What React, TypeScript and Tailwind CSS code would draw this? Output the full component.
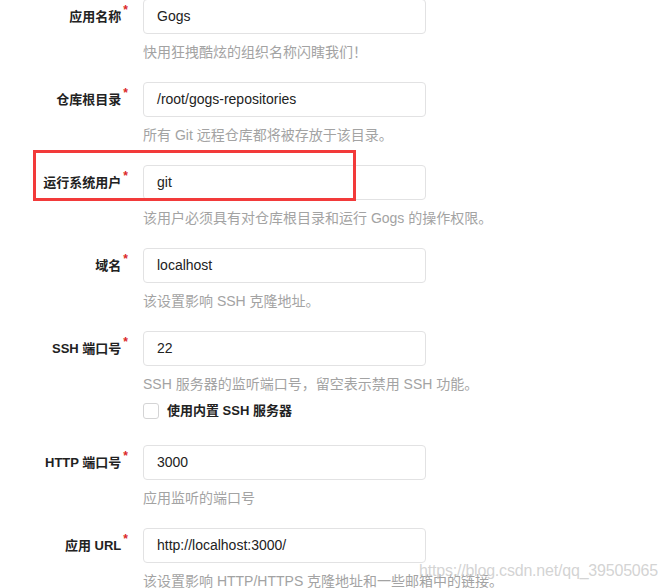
import React from 'react';

interface Field {
  label: string;
  value: string;
  help: string;
}

const fields: Field[] = [
  { label: '应用名称', value: 'Gogs', help: '快用狂拽酷炫的组织名称闪瞎我们！' },
  { label: '仓库根目录', value: '/root/gogs-repositories', help: '所有 Git 远程仓库都将被存放于该目录。' },
  { label: '运行系统用户', value: 'git', help: '该用户必须具有对仓库根目录和运行 Gogs 的操作权限。' },
  { label: '域名', value: 'localhost', help: '该设置影响 SSH 克隆地址。' },
  { label: 'SSH 端口号', value: '22', help: 'SSH 服务器的监听端口号，留空表示禁用 SSH 功能。' },
  { label: 'HTTP 端口号', value: '3000', help: '应用监听的端口号' },
  { label: '应用 URL', value: 'http://localhost:3000/', help: '该设置影响 HTTP/HTTPS 克隆地址和一些邮箱中的链接。' },
];

const font = { fontFamily: '"Liberation Sans", "Noto Sans CJK SC", sans-serif' };

const FormRow: React.FC<{ field: Field; children?: React.ReactNode }> = ({ field, children }) => (
  <div className="flex mb-[20px]">
    <label className="w-[128px] h-[35px] flex items-center justify-end text-[13px] font-bold text-[#222]">
      <span>{field.label}</span>
      <span className="self-start mt-[5px] ml-[2px] text-[12px] leading-none text-[#db2828]">*</span>
    </label>
    <div className="ml-[15px] w-[283px]">
      <div className="h-[35px] border border-[#e2e2e3] rounded-[4px] bg-white px-[13px] flex items-center text-[14px] text-[#222]">
        {field.value}
      </div>
      <p className="mt-[8px] leading-[20px] text-[14px] text-[#a3a3a3] whitespace-nowrap">{field.help}</p>
      {children}
    </div>
  </div>
);

export default function App() {
  return (
    <div className="relative w-[670px] h-[588px] overflow-hidden bg-white" style={font}>
      <div className="-mt-[1px]">
        {fields.map((f, i) => (
          <FormRow key={f.label} field={f}>
            {i === 4 && (
              <div className="mt-[7px] mb-[4px] h-[20px] flex items-center">
                <span className="w-[16px] h-[16px] border border-[#d4d4d5] rounded-[3px] bg-white" />
                <span className="ml-[8px] text-[13px] font-bold text-[#222]">使用内置 SSH 服务器</span>
              </div>
            )}
          </FormRow>
        ))}
      </div>

      <div className="absolute left-[33px] top-[150px] w-[323px] h-[51px] border-[3px] border-[#f23a3a]" />

      <div className="absolute left-[419px] top-[559px] text-[16px] tracking-[-0.2px] text-[#c8c8c8]/80 whitespace-nowrap">
        https://blog.csdn.net/qq_39505065
      </div>
    </div>
  );
}
